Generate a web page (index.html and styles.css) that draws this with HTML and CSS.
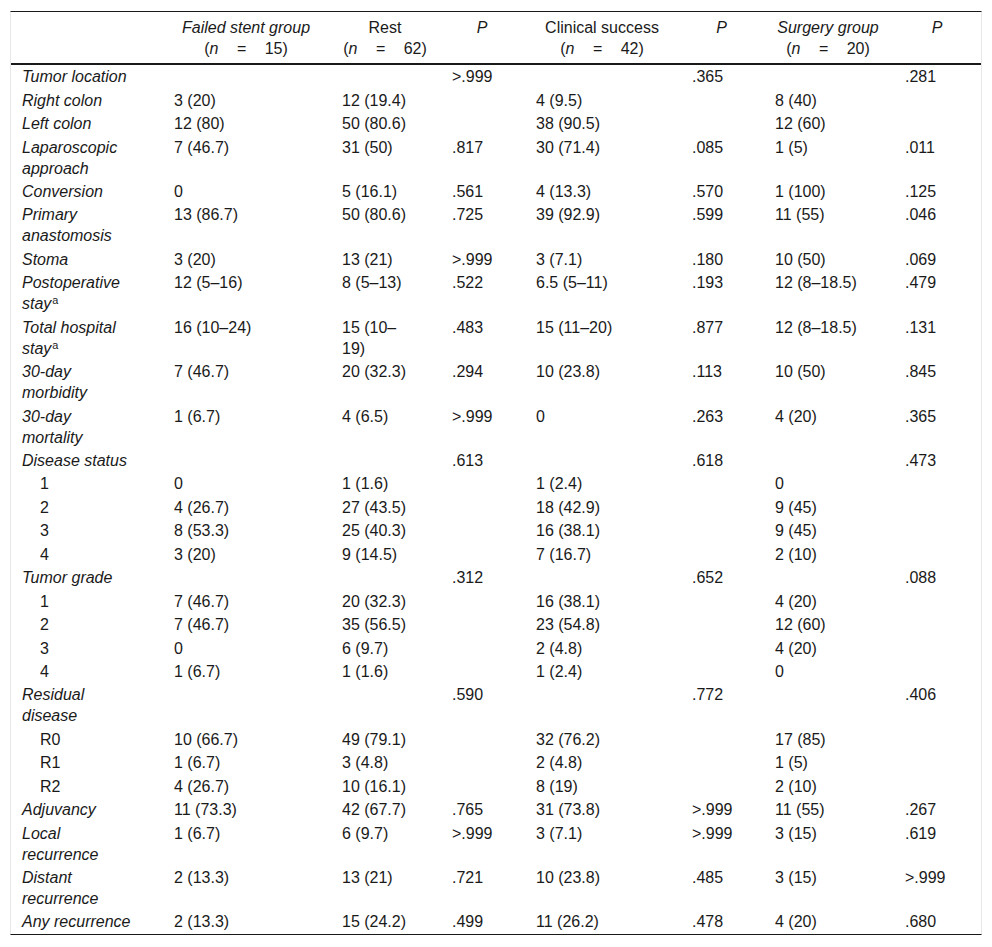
FILE: index.html
```html
<!DOCTYPE html>
<html lang="en">
<head>
<meta charset="utf-8">
<title>Outcomes table</title>
<link rel="stylesheet" href="styles.css">
</head>
<body>
<table class="data">
  <colgroup>
    <col class="c1"><col class="c2"><col class="c3"><col class="c4"><col class="c5"><col class="c6"><col class="c7"><col class="c8">
  </colgroup>
  <thead>
    <tr>
      <th></th>
      <th><i>Failed stent group</i><br><span class="n">(<i>n</i> = 15)</span></th>
      <th>Rest<br><span class="n">(<i>n</i> = 62)</span></th>
      <th><i>P</i></th>
      <th>Clinical success<br><span class="n">(<i>n</i> = 42)</span></th>
      <th><i>P</i></th>
      <th><i>Surgery group</i><br><span class="n">(<i>n</i> = 20)</span></th>
      <th><i>P</i></th>
    </tr>
  </thead>
  <tbody>
    <tr><td class="lbl">Tumor location</td><td></td><td></td><td>&gt;.999</td><td></td><td>.365</td><td></td><td>.281</td></tr>
    <tr><td class="lbl">Right colon</td><td>3 (20)</td><td>12 (19.4)</td><td></td><td>4 (9.5)</td><td></td><td>8 (40)</td><td></td></tr>
    <tr><td class="lbl">Left colon</td><td>12 (80)</td><td>50 (80.6)</td><td></td><td>38 (90.5)</td><td></td><td>12 (60)</td><td></td></tr>
    <tr><td class="lbl">Laparoscopic approach</td><td>7 (46.7)</td><td>31 (50)</td><td>.817</td><td>30 (71.4)</td><td>.085</td><td>1 (5)</td><td>.011</td></tr>
    <tr><td class="lbl">Conversion</td><td>0</td><td>5 (16.1)</td><td>.561</td><td>4 (13.3)</td><td>.570</td><td>1 (100)</td><td>.125</td></tr>
    <tr><td class="lbl">Primary anastomosis</td><td>13 (86.7)</td><td>50 (80.6)</td><td>.725</td><td>39 (92.9)</td><td>.599</td><td>11 (55)</td><td>.046</td></tr>
    <tr><td class="lbl">Stoma</td><td>3 (20)</td><td>13 (21)</td><td>&gt;.999</td><td>3 (7.1)</td><td>.180</td><td>10 (50)</td><td>.069</td></tr>
    <tr><td class="lbl">Postoperative stay<sup>a</sup></td><td>12 (5–16)</td><td>8 (5–13)</td><td>.522</td><td>6.5 (5–11)</td><td>.193</td><td>12 (8–18.5)</td><td>.479</td></tr>
    <tr><td class="lbl">Total hospital stay<sup>a</sup></td><td>16 (10–24)</td><td>15 (10–19)</td><td>.483</td><td>15 (11–20)</td><td>.877</td><td>12 (8–18.5)</td><td>.131</td></tr>
    <tr><td class="lbl">30-day morbidity</td><td>7 (46.7)</td><td>20 (32.3)</td><td>.294</td><td>10 (23.8)</td><td>.113</td><td>10 (50)</td><td>.845</td></tr>
    <tr><td class="lbl">30-day mortality</td><td>1 (6.7)</td><td>4 (6.5)</td><td>&gt;.999</td><td>0</td><td>.263</td><td>4 (20)</td><td>.365</td></tr>
    <tr><td class="lbl">Disease status</td><td></td><td></td><td>.613</td><td></td><td>.618</td><td></td><td>.473</td></tr>
    <tr><td class="sub">1</td><td>0</td><td>1 (1.6)</td><td></td><td>1 (2.4)</td><td></td><td>0</td><td></td></tr>
    <tr><td class="sub">2</td><td>4 (26.7)</td><td>27 (43.5)</td><td></td><td>18 (42.9)</td><td></td><td>9 (45)</td><td></td></tr>
    <tr><td class="sub">3</td><td>8 (53.3)</td><td>25 (40.3)</td><td></td><td>16 (38.1)</td><td></td><td>9 (45)</td><td></td></tr>
    <tr><td class="sub">4</td><td>3 (20)</td><td>9 (14.5)</td><td></td><td>7 (16.7)</td><td></td><td>2 (10)</td><td></td></tr>
    <tr><td class="lbl">Tumor grade</td><td></td><td></td><td>.312</td><td></td><td>.652</td><td></td><td>.088</td></tr>
    <tr><td class="sub">1</td><td>7 (46.7)</td><td>20 (32.3)</td><td></td><td>16 (38.1)</td><td></td><td>4 (20)</td><td></td></tr>
    <tr><td class="sub">2</td><td>7 (46.7)</td><td>35 (56.5)</td><td></td><td>23 (54.8)</td><td></td><td>12 (60)</td><td></td></tr>
    <tr><td class="sub">3</td><td>0</td><td>6 (9.7)</td><td></td><td>2 (4.8)</td><td></td><td>4 (20)</td><td></td></tr>
    <tr><td class="sub">4</td><td>1 (6.7)</td><td>1 (1.6)</td><td></td><td>1 (2.4)</td><td></td><td>0</td><td></td></tr>
    <tr><td class="lbl">Residual disease</td><td></td><td></td><td>.590</td><td></td><td>.772</td><td></td><td>.406</td></tr>
    <tr><td class="sub">R0</td><td>10 (66.7)</td><td>49 (79.1)</td><td></td><td>32 (76.2)</td><td></td><td>17 (85)</td><td></td></tr>
    <tr><td class="sub">R1</td><td>1 (6.7)</td><td>3 (4.8)</td><td></td><td>2 (4.8)</td><td></td><td>1 (5)</td><td></td></tr>
    <tr><td class="sub">R2</td><td>4 (26.7)</td><td>10 (16.1)</td><td></td><td>8 (19)</td><td></td><td>2 (10)</td><td></td></tr>
    <tr><td class="lbl">Adjuvancy</td><td>11 (73.3)</td><td>42 (67.7)</td><td>.765</td><td>31 (73.8)</td><td>&gt;.999</td><td>11 (55)</td><td>.267</td></tr>
    <tr><td class="lbl">Local recurrence</td><td>1 (6.7)</td><td>6 (9.7)</td><td>&gt;.999</td><td>3 (7.1)</td><td>&gt;.999</td><td>3 (15)</td><td>.619</td></tr>
    <tr><td class="lbl">Distant recurrence</td><td>2 (13.3)</td><td>13 (21)</td><td>.721</td><td>10 (23.8)</td><td>.485</td><td>3 (15)</td><td>&gt;.999</td></tr>
    <tr><td class="lbl">Any recurrence</td><td>2 (13.3)</td><td>15 (24.2)</td><td>.499</td><td>11 (26.2)</td><td>.478</td><td>4 (20)</td><td>.680</td></tr>
  </tbody>
</table>
</body>
</html>
```
FILE: styles.css
```css
html, body {
  margin: 0;
  padding: 0;
  background: #fff;
}

body {
  font-family: "Liberation Sans", Arial, sans-serif;
  font-size: 16px;
  color: #1a1a1a;
}

.data {
  margin: 11px 0 0 10px;
  width: 972px;
  table-layout: fixed;
  border-collapse: separate;
  border-spacing: 0;
  border-top: 1px solid #1a1a1a;
  border-bottom: 1px solid #1a1a1a;
  border-left: 1px solid #e8e8e8;
  border-right: 1px solid #e8e8e8;
}

.c1 { width: 151px; }
.c2 { width: 168px; }
.c3 { width: 110px; }
.c4 { width: 84px; }
.c5 { width: 156px; }
.c6 { width: 83px; }
.c7 { width: 130px; }
.c8 { width: 88px; }

.data th {
  font-weight: normal;
  text-align: center;
  vertical-align: top;
  line-height: 21px;
  padding: 4.5px 4px;
  border-bottom: 2px solid #1a1a1a;
}

.data th .n {
  white-space: nowrap;
  word-spacing: 14px;
}

.data td {
  text-align: left;
  vertical-align: top;
  line-height: 21px;
  padding: 1.22px 25px 1.22px 12px;
}

.data td.lbl {
  font-style: italic;
  padding-left: 11px;
  padding-right: 29px;
}

.data td.sub {
  padding-left: 29px;
}

.data sup {
  font-style: normal;
  font-size: 0.68em;
  line-height: 0;
  margin-left: 1px;
  vertical-align: 0.45em;
}
```
